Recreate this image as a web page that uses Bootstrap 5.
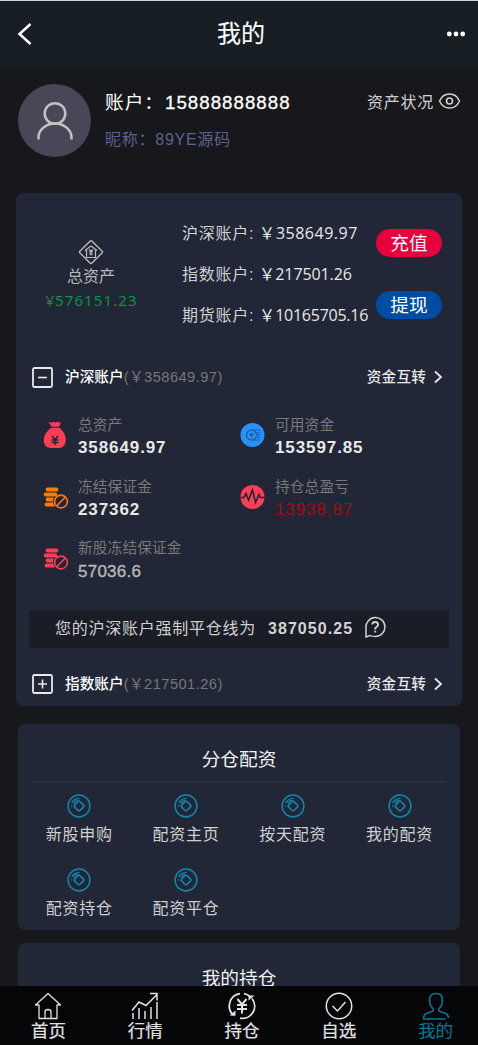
<!DOCTYPE html>
<html lang="zh-CN">
<head>
<meta charset="utf-8">
<meta name="viewport" content="width=device-width, initial-scale=1">
<title>我的</title>
<link href="https://cdn.jsdelivr.net/npm/bootstrap@5.3.0/dist/css/bootstrap.min.css" rel="stylesheet">
<style>
body{background:#17181c;color:#d0d0d0;font-family:"Liberation Sans","Noto Sans CJK SC",sans-serif;font-size:16px;line-height:24px;height:1045px;overflow:hidden;white-space:nowrap}
svg{display:block;fill:none;stroke:currentColor;flex:none}
main{height:793px;overflow:hidden}
.topbar{height:66px;background:#171f25;border-top:1px solid #d0d2d2;color:#fff;padding:0 12px 0 17px}
.topbar h1{font-size:24px;line-height:32px;font-weight:400;-webkit-text-stroke:.1px;padding-left:3px}
.profile{height:127px;padding:18px 18px 0}
.avatar{width:73px;height:73px;background:#474757;color:#c2c2c2}
.who{margin-left:14px}
.acct{font-size:18.67px;letter-spacing:1px;line-height:28px;color:#fff;margin-top:5px}
.acct span{margin-left:1px;letter-spacing:1.05px;-webkit-text-stroke:.3px}
.nick{color:#5c6190;letter-spacing:.75px;margin-top:11px}
.status{height:37px}
.status svg{margin-right:-1px}
.sp{letter-spacing:.75px}
.panel{background:#212736;border-radius:7px}
.main-panel{margin:0 16px;height:513px;padding-top:1px}
.totals{height:159px}
.sum{width:150px;padding-top:45px;color:#b9b9bb}
.green{color:#089347;font-family:"Noto Sans","Open Sans",sans-serif;font-size:15px;line-height:22px;letter-spacing:1.1px;padding-left:1px}
.balances{width:194px;margin-left:16px;padding-top:19px}
.balances>div{height:41px;display:flex;align-items:center}
.balances b{font:400 16px/24px "Open Sans","Noto Sans",sans-serif;color:#e8e8e8;position:relative;top:-1px}
.btns{padding-top:35px}
.pill{width:66px;height:28px;border-radius:14px;color:#fff;font-size:18.67px;line-height:27px;padding:0;border:0;display:block}
.pay{background:#e6003d}
.draw{background:#004ca2;margin-top:34px}
.sect{height:48px;padding:0 19px 0 16px;font-size:14.67px;color:#e8e8e8;font-weight:500}
.sect .name{margin-left:12px;color:#fff}
.sect small{color:#777;font-size:14.67px;font-weight:400;letter-spacing:.45px}
.sect .move{margin-left:auto;margin-right:7px;letter-spacing:.15px}
.stats{padding:12px 0 0 26px;height:209px}
.stats .cell{width:197px;height:61.5px}
.stats .ico{width:26px;height:26px;margin:9px 9px 0 1px}
.lab{font-size:14.67px;line-height:24px;color:#797979;letter-spacing:.15px}
.num{font-size:17px;line-height:24px;letter-spacing:.9px;font-weight:700;color:#e9e9e9;margin-top:-1px}
.num.loss{color:#a30b12;font-weight:400}
.num.soft{color:#b8b8b8;font-weight:400;-webkit-text-stroke:.35px;letter-spacing:.25px;padding-top:1px}
.notice{background:#1a1d26;margin:0 13px;height:38px;padding-left:26px}
.notice b{letter-spacing:1.05px;margin:0 11px 0 12px;color:#d4d4d4}
.grid-panel{margin:18px 18px 0;height:206px;padding-top:21px}
.last-panel{margin-top:13px}
.ptitle{font-size:18.67px;line-height:30px;color:#f2f2f2;text-align:center}
.rule{height:2px;background:#2b303f;margin:6px 14px 0}
.tiles{padding:11px 7px 0 8px}
.tile{height:74px}
.tile svg{color:#1486ab;margin-bottom:5px}
.tabs{height:59px;background:#050608;color:#e2e2e2;overflow:hidden}
.tabs a{flex:none;color:inherit;text-decoration:none;width:96.8px;font-size:17.5px;line-height:23px;padding-top:6px;-webkit-text-stroke:.2px}
.tabs .on{color:#087799;-webkit-text-stroke:0}
</style>
</head>
<body>
<svg width="0" height="0" class="position-absolute">
<symbol id="coin" viewBox="0 0 24 24"><circle cx="12" cy="12" r="10.900" stroke-width="1.500"/><path d="M10.900 7.700q1.100-1.100 2.200 0l3.200 3.200q1.100 1.100 0 2.200l-3.200 3.200q-1.100 1.100-2.200 0l-3.200-3.200q-1.100-1.100 0-2.200z" stroke-width="1.600"/><path d="M4.600 11.200v1.600M4.700 9.300Q6.500 4.500 12.600 4.300M6.900 9.300Q8.200 6.700 11 6.200" stroke-width="1.200"/></symbol>
<symbol id="frozen" viewBox="0 0 26 26"><path d="M4.500 3.600h9a1.900 1.900 0 0 1 0 3.800h-9a1.900 1.900 0 0 1 0-3.800zM2.600 8.600h9.800a1.900 1.900 0 0 1 0 3.800H2.600a1.900 1.900 0 0 1 0-3.800zM4.500 13.600h6.300a7 7 0 0 0-.8 3.800H4.500a1.900 1.900 0 0 1 0-3.800zM3.500 18.600h6.800q.3 2 1.700 3.800H3.500a1.900 1.900 0 0 1 0-3.800z" fill="currentColor" stroke="none"/><circle cx="18" cy="17.500" r="6.400" stroke-width="1.600"/><path d="M13.800 21.700l8.400-8.400" stroke-width="1.600"/></symbol>
<symbol id="go" viewBox="0 0 10 14"><path d="M2 1.500L8 7 2 12.500" stroke-width="1.800"/></symbol>
</svg>

<header class="topbar d-flex align-items-center justify-content-between">
<svg width="16" height="24" viewBox="0 0 16 24"><path d="M13.500 2L2.500 12l11 10" stroke-width="2.500"/></svg>
<h1 class="m-0">我的</h1>
<svg width="20" height="10" viewBox="0 0 20 10"><g fill="currentColor" stroke="none"><circle cx="3.300" cy="5" r="2.400"/><circle cx="10" cy="5" r="2.400"/><circle cx="16.700" cy="5" r="2.400"/></g></svg>
</header>

<section class="profile d-flex">
<div class="avatar rounded-circle d-flex align-items-center justify-content-center"><svg width="40" height="40" viewBox="0 0 40 40"><circle cx="20" cy="12.500" r="10.300" stroke-width="2.500"/><path d="M3.500 38.500v-2a16.500 14 0 0 1 33 0v2" stroke-width="2.500"/></svg></div>
<div class="who"><div class="acct">账户：<span>15888888888</span></div><div class="nick">昵称：89YE源码</div></div>
<div class="status ms-auto d-flex align-items-center"><span class="sp me-1">资产状况</span><svg width="23" height="18" viewBox="0 0 23 18" class="mb-1"><path d="M1.500 9C3.500 4.500 7 2 11.500 2S19.500 4.500 21.500 9C19.500 13.500 16 16 11.500 16S3.500 13.500 1.500 9z" stroke-width="1.500"/><circle cx="11.500" cy="9" r="3" stroke-width="1.600"/></svg></div>
</section>

<main>
<section class="panel main-panel">
<div class="totals d-flex">
<div class="sum d-flex flex-column align-items-center">
<svg width="26" height="26" viewBox="0 0 26 26"><path d="M12 2.200Q13 1.200 14 2.200L24 12Q25 13 24 14L14 24Q13 25 12 24L2 14Q1 13 2 12z" stroke-width="1.400"/><path d="M7 11.500L13 7l6 4.500M8.500 11v7.500h9V11M11.200 10.500l1.800 2 1.800-2M13 12v4.500M11.200 13h3.600M11.200 15h3.600" stroke-width="1.200"/></svg>
<div>总资产</div><div class="green">¥576151.23</div></div>
<div class="balances"><div class="sp">沪深账户:&nbsp;<b style="letter-spacing:.5px">￥358649.97</b></div><div class="sp">指数账户:&nbsp;<b style="letter-spacing:-.1px">￥217501.26</b></div><div class="sp">期货账户:&nbsp;<b style="letter-spacing:-.25px">￥10165705.16</b></div></div>
<div class="btns"><button class="pill pay">充值</button><button class="pill draw">提现</button></div>
</div>
<div class="sect d-flex align-items-center"><svg width="21" height="21" viewBox="0 0 21 21"><rect x="1" y="1" width="19" height="19" rx="1.500" stroke-width="1.800"/><path d="M6 10.500h9" stroke-width="1.600"/></svg><span class="name">沪深账户</span><small>(￥358649.97)</small><span class="move">资金互转</span><svg width="10" height="14"><use href="#go"/></svg></div>
<div class="stats d-flex flex-wrap align-content-start">
<div class="cell d-flex"><svg class="ico" viewBox="0 0 26 26"><path d="M6.500 0l3 1 2-1 2 1 2-1 2 1 2-.5-2.500 4.500h-7zM9.500 6h8q6.500 5 6.500 12t-6.500 8.500h-7Q2 26 2 18.500 2 11 9.500 6z" fill="#fe3d56" stroke="none" transform="translate(-1.200 -.3)"/><path d="M9 14l3 3.500 3-3.500M12 17v6M8.500 18h7M8.500 20.500h7" stroke="#212736" stroke-width="1.500"/></svg><div><div class="lab">总资产</div><div class="num">358649.97</div></div></div>
<div class="cell d-flex"><svg class="ico" viewBox="0 0 26 26"><circle cx="12.500" cy="13" r="12" fill="#2593ff" stroke="none"/><g stroke="#205b94" stroke-width="1.200"><circle cx="11.500" cy="13" r="5"/><path d="M11.500 8H20M11.500 18H20M17 11h3M17.500 13.200h2.500M17 15.500h3M9.500 11l2 2 2-2M11.500 13v3M9.500 13.500h4"/></g></svg><div><div class="lab">可用资金</div><div class="num">153597.85</div></div></div>
<div class="cell d-flex"><svg class="ico" style="color:#ff7c00"><use href="#frozen"/></svg><div><div class="lab">冻结保证金</div><div class="num">237362</div></div></div>
<div class="cell d-flex"><svg class="ico" viewBox="0 0 26 26"><circle cx="12.500" cy="13" r="12" fill="#fe3d56" stroke="none"/><path d="M.5 13.500H4l2-4 2.500 6.500 4-10 3 12.500 3.500-8 1.500 3H25" stroke="#212736" stroke-width="1.600"/></svg><div><div class="lab">持仓总盈亏</div><div class="num loss">13938.87</div></div></div>
<div class="cell d-flex"><svg class="ico" style="color:#fe3d56"><use href="#frozen"/></svg><div><div class="lab">新股冻结保证金</div><div class="num soft">57036.6</div></div></div>
</div>
<div class="notice d-flex align-items-center"><span class="sp">您的沪深账户强制平仓线为</span><b>387050.25</b><svg width="22" height="22" viewBox="0 0 22 22" class="mb-1"><path d="M2 21V12A9.500 9.500 0 1 1 11.500 20.500q-4 0-5.500-1z" stroke-width="1.500"/><path d="M8.200 8.500Q8.500 6 11.200 6t2.900 2.500Q14.100 10 12.500 11T11.200 13.500M11.200 14.800v1.700" stroke-width="1.900"/></svg></div>
<div class="sect d-flex align-items-center" style="height:71px"><svg width="21" height="20" viewBox="0 0 21 20"><rect x="1" y="1" width="19" height="18" rx="1.500" stroke-width="1.800"/><path d="M6 10h9M10.500 5.500v9" stroke-width="1.600"/></svg><span class="name">指数账户</span><small>(￥217501.26)</small><span class="move">资金互转</span><svg width="10" height="14"><use href="#go"/></svg></div>
</section>

<section class="panel grid-panel">
<div class="ptitle">分仓配资</div><div class="rule"></div>
<div class="row g-0 tiles sp">
<div class="col-3 tile d-flex flex-column align-items-center"><svg width="24" height="24"><use href="#coin"/></svg>新股申购</div>
<div class="col-3 tile d-flex flex-column align-items-center"><svg width="24" height="24"><use href="#coin"/></svg>配资主页</div>
<div class="col-3 tile d-flex flex-column align-items-center"><svg width="24" height="24"><use href="#coin"/></svg>按天配资</div>
<div class="col-3 tile d-flex flex-column align-items-center"><svg width="24" height="24"><use href="#coin"/></svg>我的配资</div>
<div class="col-3 tile d-flex flex-column align-items-center"><svg width="24" height="24"><use href="#coin"/></svg>配资持仓</div>
<div class="col-3 tile d-flex flex-column align-items-center"><svg width="24" height="24"><use href="#coin"/></svg>配资平仓</div>
</div>
</section>
<section class="panel grid-panel last-panel"><div class="ptitle">我的持仓</div></section>
</main>

<nav class="tabs fixed-bottom d-flex">
<a href="#" class="d-flex flex-column align-items-center"><svg width="28" height="28" viewBox="0 0 28 28"><path d="M5 13H1.500L14 1.500 26.500 13H23v13.500H5zM11 26v-6q0-2.500 3-2.500t3 2.500v6" stroke-width="1.300" stroke-linejoin="round"/></svg>首页</a>
<a href="#" class="d-flex flex-column align-items-center"><svg width="28" height="28" viewBox="0 0 28 28"><path d="M1 18.500L8 10l7 3.500L26 2.500M19 1.500h7v7M2 21v6M8 16v11M14 19v8M20 15v12M26 10v17" stroke-width="1.500"/></svg>行情</a>
<a href="#" class="d-flex flex-column align-items-center"><svg width="28" height="28" viewBox="0 0 28 28"><path d="M12 1.700A12.300 12.300 0 0 0 6 23.500M16 1.700q3 .5 5.500 2.300M24 6.500A12.300 12.300 0 0 1 12 26.200" stroke-width="1.800"/><path d="M1.500 23.500h6v-5zM26.500 3.500h-6v5z" fill="currentColor" stroke="none"/><path d="M9.500 7l4.500 5.500L18.500 7M14 12v9.500M9 13h10M9 17h10" stroke-width="2"/></svg>持仓</a>
<a href="#" class="d-flex flex-column align-items-center"><svg width="28" height="28" viewBox="0 0 28 28"><circle cx="14" cy="14" r="12.700" stroke-width="1.500"/><path d="M7.500 14l5 5 8-9" stroke-width="1.500"/></svg>自选</a>
<a href="#" class="on d-flex flex-column align-items-center"><svg width="28" height="28" viewBox="0 0 28 28"><path d="M23.500 27H1.500q0-4.500 4-6l4.500-1.500q2.500-1.300.5-3.500Q7.700 13.500 7.700 10V7.500q0-6 6.300-6t6.300 6V10q0 3.500-2.800 6-2 2.200.5 3.500l4.500 1.500q4 1.500 4 5" stroke-width="1.500"/></svg>我的</a>
</nav>
<script src="https://cdn.jsdelivr.net/npm/bootstrap@5.3.0/dist/js/bootstrap.bundle.min.js"></script>
</body>
</html>
